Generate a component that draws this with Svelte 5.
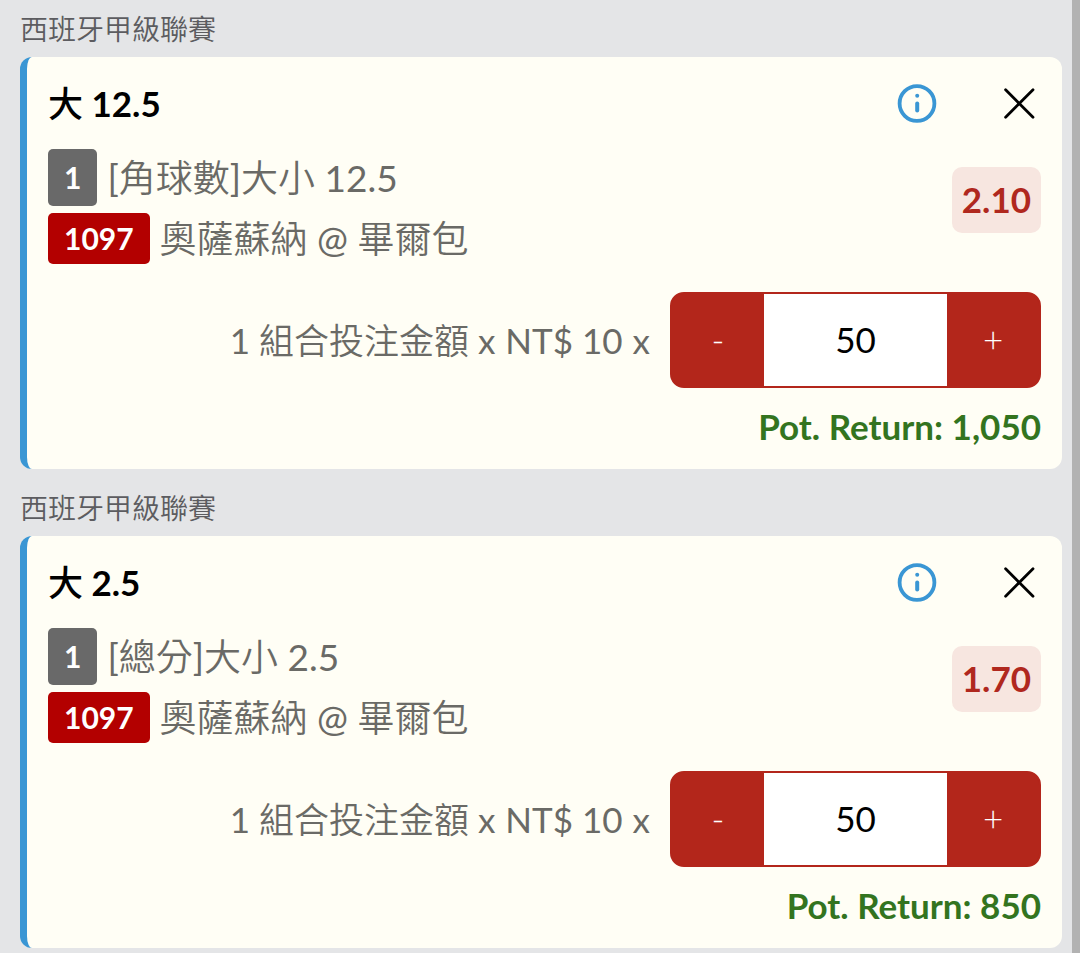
<script>
  let bets = $state([
    { league: '西班牙甲級聯賽', pick: '大 12.5', market: '[角球數]大小 12.5', code: '1097', match: '奧薩蘇納 @ 畢爾包', odds: 2.1, units: 50 },
    { league: '西班牙甲級聯賽', pick: '大 2.5', market: '[總分]大小 2.5', code: '1097', match: '奧薩蘇納 @ 畢爾包', odds: 1.7, units: 50 }
  ]);

  const unitPrice = 10;

  function potentialReturn(bet) {
    return Math.round(bet.units * unitPrice * bet.odds).toLocaleString('en-US');
  }

  function step(bet, by) {
    bet.units = Math.max(1, Number(bet.units) + by);
  }
</script>

<div class="slip">
  <main class="list">
    {#each bets as bet, i (bet)}
      <section class="group">
        <h2 class="league">{bet.league}</h2>
        <article class="card">
          <header class="head">
            <h3 class="pick">{bet.pick}</h3>
            <button class="icon info" type="button" aria-label="Info">
              <svg viewBox="0 0 40 40" width="40" height="40" fill="none" stroke="currentColor">
                <circle cx="20" cy="20.5" r="17.4" stroke-width="3.8" />
                <circle cx="20.2" cy="12.8" r="2" fill="currentColor" stroke="none" />
                <path d="M20.2 20.6V27.6" stroke-width="4" stroke-linecap="round" />
              </svg>
            </button>
            <button class="icon close" type="button" aria-label="Remove" onclick={() => bets.splice(i, 1)}>
              <svg viewBox="0 0 32 32" width="32" height="32" fill="none" stroke="currentColor">
                <path d="M2.6 2.8 30 30.2M30 2.8 2.6 30.2" stroke-width="2.8" stroke-linecap="round" />
              </svg>
            </button>
          </header>

          <div class="body">
            <div class="lines">
              <p class="line"><span class="tag leg">1</span><span>{bet.market}</span></p>
              <p class="line"><span class="tag code">{bet.code}</span><span>{bet.match}</span></p>
            </div>
            <strong class="odds">{bet.odds.toFixed(2)}</strong>
          </div>

          <div class="stake">
            <label class="formula" for="units-{i}">
              <span>1 組合投注金額 x</span>
              <span>NT$ 10</span>
              <span>x</span>
            </label>
            <div class="stepper">
              <button type="button" aria-label="Decrease" onclick={() => step(bet, -1)}>-</button>
              <input id="units-{i}" type="text" inputmode="numeric" bind:value={bet.units} />
              <button type="button" aria-label="Increase" onclick={() => step(bet, 1)}>+</button>
            </div>
          </div>

          <p class="return">Pot. Return: {potentialReturn(bet)}</p>
        </article>
      </section>
    {/each}
  </main>
  <div class="rail" aria-hidden="true"></div>
</div>

<style>
  :global(body) {
    background: #e4e5e7;
  }

  .slip {
    display: flex;
    min-height: 100vh;
    font-family: Lato, 'Noto Sans CJK TC DemiLight', 'Noto Sans CJK TC', sans-serif;
    font-size: 35px;
    color: #6a6a66;
  }

  .slip * {
    box-sizing: border-box;
  }

  .list {
    flex: 1;
    min-width: 0;
    display: flex;
    flex-direction: column;
    gap: 19px;
    padding: 9px 10px 5px 20px;
  }

  .rail {
    width: 8px;
    background: #b2b2b2;
  }

  h2,
  h3,
  p {
    margin: 0;
  }

  .league {
    padding-bottom: 8px;
    font-size: 28px;
    font-weight: 400;
    line-height: 40px;
    color: #5c5c60;
  }

  .card {
    padding: 0 21px;
    border-left: 7px solid #3a96d4;
    border-radius: 12px;
    background: #fffef5;
  }

  .head {
    display: flex;
    align-items: center;
    height: 92px;
  }

  .pick {
    flex: 1;
    padding-bottom: 4px;
    font-family: Lato, 'Noto Sans CJK TC Medium', 'Noto Sans CJK TC', sans-serif;
    font-size: 35px;
    font-weight: 700;
    color: #000;
  }

  .icon {
    display: flex;
    padding: 0;
    border: 0;
    background: none;
    cursor: pointer;
  }

  .info {
    color: #3a96d4;
  }

  .close {
    margin: 0 6px 0 66px;
    color: #000;
  }

  .body {
    display: flex;
    justify-content: space-between;
    align-items: flex-start;
  }

  .lines {
    display: flex;
    flex-direction: column;
    gap: 7px;
  }

  .line {
    display: flex;
    align-items: center;
    gap: 10px;
    font-size: 37px;
    line-height: 51px;
  }

  .tag {
    padding: 0 16px;
    border-radius: 5px;
    font-size: 30px;
    font-weight: 700;
    color: #fff;
  }

  .leg {
    line-height: 57px;
    background: #696969;
  }

  .code {
    background: #b30000;
  }

  .odds {
    margin-top: 18px;
    padding: 0 10px 2px;
    border-radius: 10px;
    line-height: 64px;
    font-weight: 700;
    color: #b0281e;
    background: #f7e6e0;
  }

  .stake {
    display: flex;
    justify-content: flex-end;
    align-items: center;
    gap: 20px;
    margin-top: 28px;
  }

  .formula {
    display: flex;
    align-items: baseline;
    gap: 10px;
    padding-bottom: 4px;
  }

  .stepper {
    display: flex;
    width: 371px;
    height: 96px;
    border: 2px solid #b3261b;
    border-radius: 14px;
    background: #b3261b;
    overflow: hidden;
  }

  .stepper button,
  .stepper input {
    flex: 1;
    min-width: 0;
    padding: 0 0 2px;
    border: 0;
    font-family: inherit;
    font-size: 35px;
    text-align: center;
  }

  .stepper button {
    font-weight: 300;
    color: #fff;
    background: #b3261b;
    cursor: pointer;
  }

  .stepper input {
    flex: 2;
    color: #000;
    background: #fff;
  }

  .return {
    padding-bottom: 4px;
    line-height: 77px;
    text-align: right;
    font-weight: 700;
    color: #33741f;
  }
</style>
